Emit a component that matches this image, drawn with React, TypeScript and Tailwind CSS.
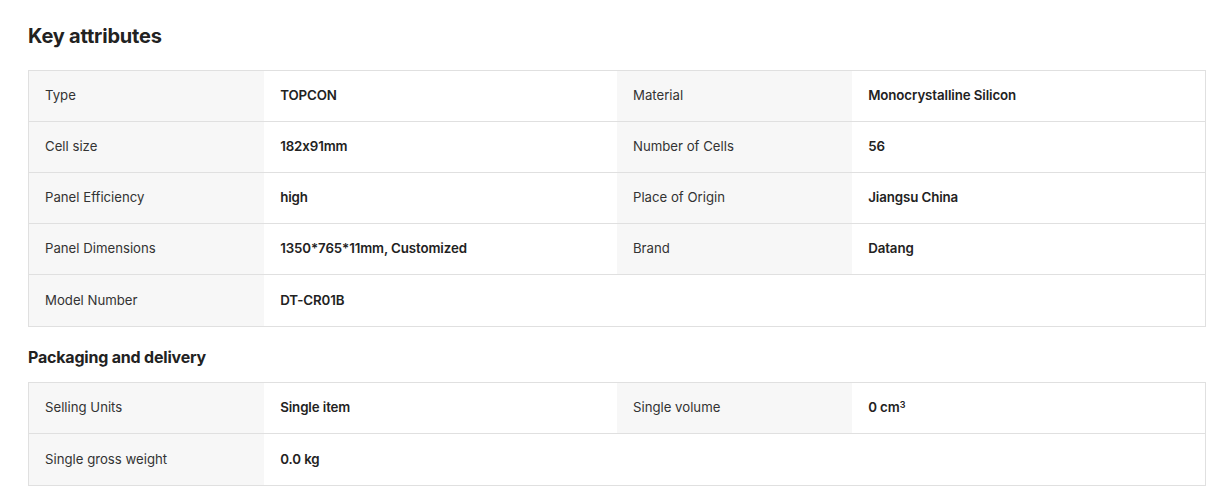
const keyAttributes: [string, string, string?, string?][] = [
  ['Type', 'TOPCON', 'Material', 'Monocrystalline Silicon'],
  ['Cell size', '182x91mm', 'Number of Cells', '56'],
  ['Panel Efficiency', 'high', 'Place of Origin', 'Jiangsu China'],
  ['Panel Dimensions', '1350*765*11mm, Customized', 'Brand', 'Datang'],
  ['Model Number', 'DT-CR01B'],
];

const AttrTable = ({ rows }: { rows: [string, React.ReactNode, string?, React.ReactNode?][] }) => {
  return (
    <div className="border border-[#e0e0e0]">
      {rows.map((row, i) => (
        <div
          key={i}
          className={`grid grid-cols-[20%_30%_20%_30%] h-[51px] ${i < rows.length - 1 ? 'border-b border-[#e0e0e0]' : 'h-[50px]'}`}
        >
          <div className="bg-[#f7f7f7] flex items-center px-4 text-[#333] text-[13.2px]">{row[0]}</div>
          <div className="flex items-center px-4 text-[#222] text-[13.3px] font-semibold tracking-[-0.1px]">{row[1]}</div>
          {row[2] ? (
            <div className="bg-[#f7f7f7] flex items-center px-4 text-[#333] text-[13.2px]">{row[2]}</div>
          ) : (
            <div />
          )}
          <div className="flex items-center px-4 text-[#222] text-[13.3px] font-semibold tracking-[-0.1px]">{row[3]}</div>
        </div>
      ))}
    </div>
  );
};

export default function App() {
  return (
    <div className="bg-white w-[1212px] h-[503px] pl-[28px] pr-[6px] pt-[22px] font-['Inter',sans-serif] [font-feature-settings:'calt'_0]">
      <h2 className="text-xl leading-7 font-bold text-[#222] mb-5 tracking-[-0.2px]">Key attributes</h2>
      <AttrTable rows={keyAttributes} />
      <h3 className="text-base leading-6 font-bold text-[#222] mt-[18px] mb-[13px] tracking-[-0.2px]">Packaging and delivery</h3>
      <AttrTable
        rows={[
          [
            'Selling Units',
            'Single item',
            'Single volume',
            <span>
              0 cm<sup className="text-[9px]">3</sup>
            </span>,
          ],
          ['Single gross weight', '0.0 kg'],
        ]}
      />
    </div>
  );
}
